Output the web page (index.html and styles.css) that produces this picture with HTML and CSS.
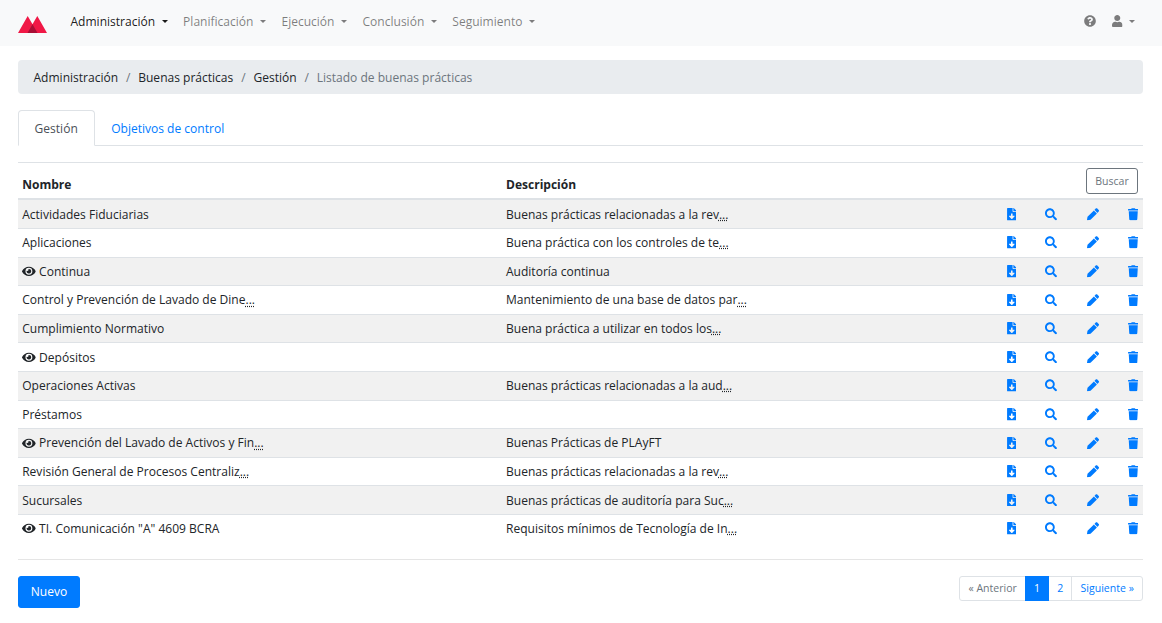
FILE: index.html
```html
<!DOCTYPE html>
<html lang="es">
<head>
<meta charset="utf-8">
<title>Listado de buenas prácticas</title>
<link rel="stylesheet" href="styles.css">
</head>
<body>
<svg class="sprite" aria-hidden="true">
  <symbol id="eye" viewBox="0 0 576 512"><path d="M572.52 241.4C518.29 135.59 410.93 64 288 64S57.68 135.64 3.48 241.41a32.35 32.35 0 0 0 0 29.19C57.71 376.41 165.07 448 288 448s230.32-71.64 284.52-177.41a32.35 32.35 0 0 0 0-29.19zM288 400a144 144 0 1 1 144-144 143.93 143.93 0 0 1-144 144zm0-240a95.31 95.31 0 0 0-25.31 3.79 47.85 47.85 0 0 1-66.9 66.9A95.78 95.78 0 1 0 288 160z"/></symbol>
  <symbol id="help" viewBox="0 0 512 512"><path d="M504 256c0 137-111 248-248 248S8 393 8 256C8 119.083 119 8 256 8s248 111.083 248 248zM262.655 90c-54.497 0-89.255 22.957-116.549 63.758-3.536 5.286-2.353 12.415 2.715 16.258l34.699 26.31c5.205 3.947 12.621 3.008 16.665-2.122 17.864-22.658 30.113-35.797 57.303-35.797 20.429 0 45.698 13.148 45.698 32.958 0 14.976-12.363 22.667-32.534 33.976C247.128 238.528 216 254.941 216 296v4c0 6.627 5.373 12 12 12h56c6.627 0 12-5.373 12-12v-1.333c0-28.462 83.186-29.647 83.186-106.667 0-58.002-60.165-102-116.531-102zM256 338c-25.365 0-46 20.635-46 46 0 25.364 20.635 46 46 46s46-20.636 46-46c0-25.365-20.635-46-46-46z"/></symbol>
  <symbol id="user" viewBox="0 0 448 512"><path d="M224 256c70.7 0 128-57.3 128-128S294.700 0 224 0 96 57.300 96 128s57.300 128 128 128zm89.600 32h-16.700c-22.200 10.200-46.900 16-72.900 16s-50.600-5.800-72.900-16h-16.700C60.200 288 0 348.200 0 422.400V464c0 26.500 21.500 48 48 48h352c26.500 0 48-21.500 48-48v-41.600c0-74.200-60.200-134.400-134.400-134.400z"/></symbol>
  <symbol id="download" viewBox="0 0 384 512"><path d="M224 136V0H24C10.700 0 0 10.700 0 24v464c0 13.300 10.700 24 24 24h336c13.300 0 24-10.700 24-24V160H248c-13.200 0-24-10.800-24-24zm76.450 211.360l-96.420 95.700c-6.650 6.610-17.390 6.610-24.040 0l-96.420-95.700C73.420 337.290 80.540 320 94.820 320H160v-80c0-8.840 7.160-16 16-16h32c8.840 0 16 7.160 16 16v80h65.180c14.280 0 21.400 17.290 11.270 27.360zM377 105L279.100 7c-4.500-4.500-10.600-7-17-7H256v128h128v-6.100c0-6.300-2.500-12.400-7-16.900z"/></symbol>
  <symbol id="search" viewBox="0 0 512 512"><path d="M505 442.700L405.300 343c-4.500-4.500-10.600-7-17-7H372c27.600-35.300 44-79.700 44-128C416 93.100 322.900 0 208 0S0 93.100 0 208s93.100 208 208 208c48.300 0 92.700-16.400 128-44v16.300c0 6.400 2.500 12.500 7 17l99.700 99.700c9.400 9.400 24.600 9.400 33.900 0l28.300-28.300c9.400-9.400 9.400-24.600.1-34zM208 336c-70.700 0-128-57.200-128-128 0-70.700 57.200-128 128-128 70.700 0 128 57.200 128 128 0 70.700-57.200 128-128 128z"/></symbol>
  <symbol id="pencil" viewBox="0 0 512 512"><path d="M497.900 142.100l-46.100 46.100c-4.700 4.700-12.300 4.700-17 0l-111-111c-4.700-4.700-4.700-12.300 0-17l46.100-46.100c18.700-18.700 49.100-18.700 67.900 0l60.100 60.100c18.800 18.700 18.800 49.100 0 67.900zM284.200 99.800L21.600 362.400.4 483.900c-2.900 16.400 11.400 30.600 27.800 27.800l121.500-21.300 262.600-262.600c4.700-4.700 4.700-12.300 0-17l-111-111c-4.800-4.700-12.400-4.700-17.100 0z"/></symbol>
  <symbol id="trash" viewBox="0 0 448 512"><path d="M432 32H312l-9.400-18.700A24 24 0 0 0 281.100 0H166.800a23.720 23.720 0 0 0-21.400 13.300L136 32H16A16 16 0 0 0 0 48v32a16 16 0 0 0 16 16h416a16 16 0 0 0 16-16V48a16 16 0 0 0-16-16zM53.200 467a48 48 0 0 0 47.900 45h245.800a48 48 0 0 0 47.900-45L416 128H32z"/></symbol>
</svg>

<nav class="navbar">
  <svg class="logo" viewBox="0 0 29 17"><path fill="#f01846" d="M0 17 9.700 0 14.500 8.300 19.300 0 29 17z"/><path fill="#a80f35" d="M9.500 17 14.500 8.300 19.500 17z"/></svg>
  <ul class="menu">
    <li class="link caret active">Administración </li>
    <li class="link caret">Planificación </li>
    <li class="link caret">Ejecución </li>
    <li class="link caret">Conclusión </li>
    <li class="link caret">Seguimiento </li>
  </ul>
  <ul class="menu tools">
    <li class="link"><svg class="icon"><use href="#help"/></svg></li>
    <li class="link caret"><svg class="icon narrow"><use href="#user"/></svg> </li>
  </ul>
</nav>

<main class="container">
  <ol class="breadcrumb">
    <li>Administración</li><li>Buenas prácticas</li><li>Gestión</li><li class="current">Listado de buenas prácticas</li>
  </ol>
  <ul class="tabs">
    <li class="tab selected">Gestión</li>
    <li class="tab">Objetivos de control</li>
  </ul>

  <table class="table">
    <colgroup><col class="c-name"><col class="c-desc"><col class="c-download"><col class="c-search"><col class="c-edit"><col class="c-delete"></colgroup>
    <thead>
      <tr><th>Nombre</th><th>Descripción</th><th class="filter" colspan="4"><button class="btn-small">Buscar</button></th></tr>
    </thead>
    <tbody id="rows"></tbody>
  </table>

  <hr class="rule">
  <footer class="footer">
    <button class="btn">Nuevo</button>
    <ul class="pagination">
      <li class="disabled">« Anterior</li><li class="on">1</li><li>2</li><li>Siguiente »</li>
    </ul>
  </footer>
</main>
<script src="rows.js"></script>
</body>
</html>
```
FILE: rows.js
```js
const rows = [
  ['Actividades Fiduciarias', 'Buenas prácticas relacionadas a la rev...'],
  ['Aplicaciones', 'Buena práctica con los controles de te...'],
  ['Continua', 'Auditoría continua', true],
  ['Control y Prevención de Lavado de Dine...', 'Mantenimiento de una base de datos par...'],
  ['Cumplimiento Normativo', 'Buena práctica a utilizar en todos los...'],
  ['Depósitos', '', true],
  ['Operaciones Activas', 'Buenas prácticas relacionadas a la aud...'],
  ['Préstamos', ''],
  ['Prevención del Lavado de Activos y Fin...', 'Buenas Prácticas de PLAyFT', true],
  ['Revisión General de Procesos Centraliz...', 'Buenas prácticas relacionadas a la rev...'],
  ['Sucursales', 'Buenas prácticas de auditoría para Suc...'],
  ['TI. Comunicación "A" 4609 BCRA', 'Requisitos mínimos de Tecnología de In...', true]
];
const icon = (name, cls = '') => `<svg class="icon ${cls}"><use href="#${name}"/></svg>`;
const text = s => s.replace(/\.\.\.$/, '<abbr>...</abbr>');
document.getElementById('rows').innerHTML = rows.map(([name, desc, shared]) => `<tr>
  <td>${shared ? icon('eye', 'wide') + ' ' : ''}${text(name)}</td><td>${text(desc)}</td>
  <td class="action">${icon('download', 'file')}</td><td class="action">${icon('search')}</td>
  <td class="action">${icon('pencil')}</td><td class="action">${icon('trash', 'narrow')}</td></tr>`).join('');
```
FILE: styles.css
```css
* { box-sizing: border-box; }
body {
  margin: 0;
  background: #fff;
  color: #212529;
  font: 12.04px/18px "Open Sans", "Noto Sans", sans-serif;
}
ul, ol { margin: 0; padding: 0; list-style: none; }
button { font: inherit; }
.sprite { display: none; }
.icon { width: 12.04px; height: 12.04px; fill: currentColor; vertical-align: -1.5px; }
.icon.wide { width: 13.8px; }
.icon.narrow { width: 10.54px; }
.icon.file { width: 9.6px; }
td .icon { height: 12.6px; vertical-align: -1.7px; }

.navbar {
  display: flex;
  align-items: center;
  height: 46px;
  padding: 0 19px 0 18px;
  background: #f8f9fa;
}
.logo { width: 29px; height: 17px; margin: 2px 15.7px 0 0; }
.menu { display: flex; margin-top: -2px; }
.link { padding: 0 7.8px; color: rgba(0, 0, 0, .5); white-space: pre; }
.link.active { color: rgba(0, 0, 0, .9); }
.caret::after {
  content: "";
  display: inline-block;
  margin-left: 3.3px;
  vertical-align: 3px;
  border: 3.6px solid transparent;
  border-top-color: currentColor;
  border-bottom: 0;
}
.tools { margin-left: auto; }
.tools .link:first-child { padding-right: 8.5px; }

.container { padding: 14px 19px 0 18px; }
.breadcrumb {
  display: flex;
  height: 34px;
  align-items: center;
  padding: 1px 15.5px 0;
  border-radius: 4px;
  background: #e9ecef;
}
.breadcrumb li + li::before { content: "/"; padding: 0 7.85px; color: #6c757d; }
.breadcrumb .current { color: #6c757d; }

.tabs { display: flex; margin: 16px 0; height: 36px; border-bottom: 1px solid #dee2e6; }
.tab { height: 36px; padding: 10px 16.3px; color: #007bff; }
.tab.selected {
  padding: 9px 16.1px 9px 15.6px;
  border: 1px solid #dee2e6;
  border-bottom-color: #fff;
  border-radius: 4px 4px 0 0;
  background: #fff;
  color: #495057;
}

.table { width: 100%; table-layout: fixed; border-collapse: separate; border-spacing: 0; }
.c-download { width: 40px; }
.c-search { width: 40.5px; }
.c-edit { width: 41.5px; }
.c-delete { width: 39.5px; }
.c-name { width: 483.8px; }
th {
  height: 38px;
  padding: 4px 4.2px;
  border-top: 1px solid #dee2e6;
  border-bottom: 2px solid #dee2e6;
  text-align: left;
  vertical-align: bottom;
}
.filter { padding-right: 5px; vertical-align: middle; font-weight: 400; }
td { height: 28.6px; padding: 4.25px 4.2px 3.5px; border-top: 1px solid #dee2e6; white-space: nowrap; vertical-align: top; line-height: 19px; }
tbody tr:first-child td { height: 28px; padding-top: 5px; border-top: 0; }
tbody tr:nth-child(odd) { background: #f1f1f1; }
td.action { padding-right: 5px; text-align: right; color: #007bff; }
td.action:nth-child(3) { padding-right: 5.4px; }
td.action:nth-child(5) { padding-right: 4.5px; }
td.action:nth-child(6) { padding-right: 4.7px; }
abbr { text-decoration: underline dotted; }

.btn-small {
  display: block;
  width: 52px;
  height: 26px;
  margin-left: auto;
  padding: 0;
  border: 1px solid #6c757d;
  border-radius: 3px;
  background: #fff;
  color: #6c757d;
  font-size: 10.54px;
}
.rule { margin: 16.6px 0 16px; border: 0; border-top: 1px solid #e5e5e5; }
.footer { display: flex; justify-content: space-between; align-items: flex-start; }
.btn {
  width: 62px;
  height: 32px;
  padding: 0;
  border: 1px solid #007bff;
  border-radius: 3px;
  background: #007bff;
  color: #fff;
}
.pagination { display: flex; font-size: 10.54px; line-height: 23px; }
.pagination li { padding: 0 8.15px; margin-left: -1px; border: 1px solid #dee2e6; color: #007bff; }
.pagination li:first-child { border-radius: 3px 0 0 3px; }
.pagination li:last-child { border-radius: 0 3px 3px 0; }
.pagination .disabled { padding: 0 8px; color: #6c757d; }
.pagination .on { z-index: 1; border-color: #007bff; background: #007bff; color: #fff; }
```
